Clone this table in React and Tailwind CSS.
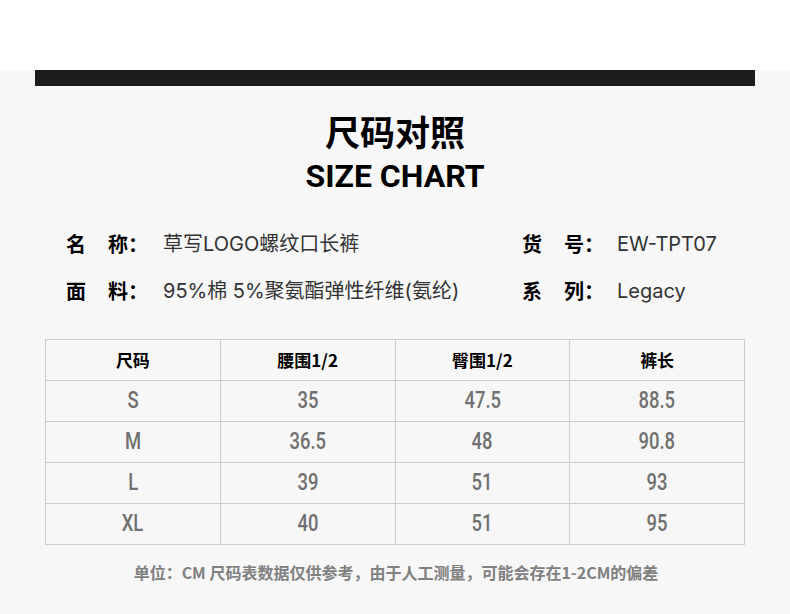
import React from 'react';

const cjk = '"Noto Sans CJK SC", sans-serif';
const sansCjk = 'Inter, "Noto Sans CJK SC", sans-serif';
const numFont = 'Roboto, "Noto Sans CJK SC", sans-serif';

const rows = [
  ['S', '35', '47.5', '88.5'],
  ['M', '36.5', '48', '90.8'],
  ['L', '39', '51', '93'],
  ['XL', '40', '51', '95'],
];

const Label = ({ a, b }) => (
  <div className="flex w-[97px] shrink-0 font-bold text-black" style={{ fontFamily: cjk }}>
    <span className="w-[42px]">{a}</span>
    <span>{b}：</span>
  </div>
);

const App = () => {
  return (
    <div className="w-[790px] h-[614px] bg-white overflow-hidden">
      <div className="h-[70px] bg-white" />
      <div className="h-[544px] bg-[#f7f7f7]">
        <div className="mx-[35px] h-[16px] bg-[#1c1c1c]" />

        <div className="flex flex-col items-center mt-[23px]">
          <h1 className="text-[35px] leading-[44px] font-bold text-black" style={{ fontFamily: cjk }}>尺码对照</h1>
          <h2 className="text-[32px] leading-[46px] font-bold text-black" style={{ fontFamily: 'Roboto, sans-serif' }}>SIZE CHART</h2>
        </div>

        <div className="mt-[31px] pl-[66px] text-[20px] leading-[28px] text-[#333]">
          <div className="flex">
            <div className="flex w-[456px]">
              <Label a="名" b="称" />
              <span style={{ fontFamily: sansCjk }}>草写LOGO螺纹口长裤</span>
            </div>
            <div className="flex">
              <div className="w-[95px] shrink-0 flex font-bold text-black" style={{ fontFamily: cjk }}>
                <span className="w-[42px]">货</span>
                <span>号：</span>
              </div>
              <span style={{ fontFamily: sansCjk }}>EW-TPT07</span>
            </div>
          </div>
          <div className="flex mt-[19px]">
            <div className="flex w-[456px]">
              <Label a="面" b="料" />
              <span style={{ fontFamily: sansCjk }}>95%棉 5%聚氨酯弹性纤维(氨纶)</span>
            </div>
            <div className="flex">
              <div className="w-[95px] shrink-0 flex font-bold text-black" style={{ fontFamily: cjk }}>
                <span className="w-[42px]">系</span>
                <span>列：</span>
              </div>
              <span style={{ fontFamily: sansCjk }}>Legacy</span>
            </div>
          </div>
        </div>

        <table className="mt-[34px] ml-[45px] w-[700px] border-collapse table-fixed">
          <thead>
            <tr className="h-[41px]">
              {['尺码', '腰围1/2', '臀围1/2', '裤长'].map((h) => (
                <th key={h} className="border border-[#cccccc] text-[17px] font-bold text-black" style={{ fontFamily: cjk }}>{h}</th>
              ))}
            </tr>
          </thead>
          <tbody>
            {rows.map((r) => (
              <tr key={r[0]} className="h-[41px]">
                {r.map((c, i) => (
                  <td key={i} className="border border-[#cccccc] text-center text-[#707070]" style={{ fontFamily: numFont }}>
                    <span className="inline-block text-[23px] leading-[28px] font-medium scale-x-[0.8]">{c}</span>
                  </td>
                ))}
              </tr>
            ))}
          </tbody>
        </table>

        <p className="mt-[15px] text-center text-[16px] font-bold text-[#808080] pl-[2px]" style={{ fontFamily: cjk }}>
          单位：CM 尺码表数据仅供参考，由于人工测量，可能会存在1-2CM的偏差
        </p>
      </div>
    </div>
  );
};

export default App;
